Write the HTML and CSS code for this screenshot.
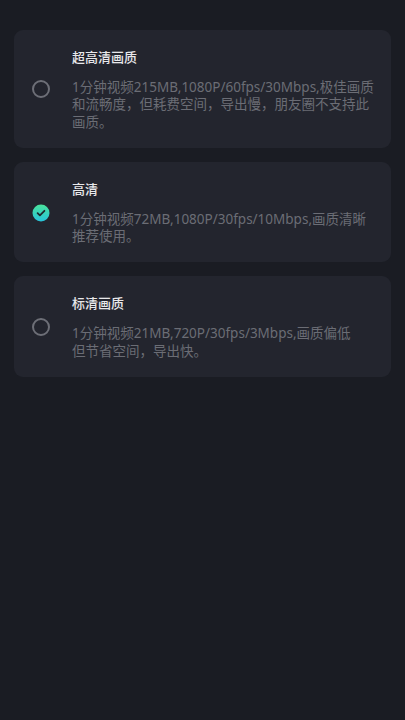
FILE: index.html
```html
<!DOCTYPE html>
<html lang="zh-CN">
<head>
<meta charset="utf-8">
<meta name="viewport" content="width=device-width, initial-scale=1">
<link rel="stylesheet" href="styles.css">
<title>画质选择</title>
</head>
<body>
<main class="list">
  <section class="card">
    <span class="radio"></span>
    <div class="info">
      <div class="title">超高清画质</div>
      <div class="desc">1分钟视频215MB,1080P/60fps/30Mbps,极佳画质<br>和流畅度，但耗费空间，导出慢，朋友圈不支持此<br>画质。</div>
    </div>
  </section>
  <section class="card">
    <span class="radio checked">
      <svg viewBox="0 0 18 18" width="18" height="18">
        <defs>
          <linearGradient id="g" x1="0" y1="0" x2="0" y2="1">
            <stop offset="0" stop-color="#4ae39b"/>
            <stop offset="1" stop-color="#27c4dc"/>
          </linearGradient>
        </defs>
        <circle cx="9" cy="9" r="8.5" fill="url(#g)"/>
        <path d="M5.6 9.2 L7.9 11.4 L12.4 6.8" fill="none" stroke="#1e2a30" stroke-width="1.8" stroke-linecap="round" stroke-linejoin="round"/>
      </svg>
    </span>
    <div class="info">
      <div class="title">高清</div>
      <div class="desc">1分钟视频72MB,1080P/30fps/10Mbps,画质清晰<br>推荐使用。</div>
    </div>
  </section>
  <section class="card">
    <span class="radio"></span>
    <div class="info">
      <div class="title">标清画质</div>
      <div class="desc">1分钟视频21MB,720P/30fps/3Mbps,画质偏低<br>但节省空间，导出快。</div>
    </div>
  </section>
</main>
</body>
</html>
```
FILE: styles.css
```css
html, body {
  margin: 0;
  padding: 0;
  background: #1a1c23;
  height: 100%;
}
body {
  font-family: "Noto Sans", "Noto Sans CJK SC", sans-serif;
  color: #e6e6e8;
}
.list {
  display: flex;
  flex-direction: column;
  gap: 14px;
  padding: 30px 14px 0 14px;
}
.card {
  display: flex;
  align-items: center;
  background: #23252e;
  border-radius: 9px;
  padding: 18px 16px 17px 17.5px;
}
.radio {
  flex: none;
  width: 18px;
  height: 18px;
  box-sizing: border-box;
  border: 2px solid #6d6f77;
  border-radius: 50%;
  margin-right: 22.5px;
  display: flex;
}
.radio.checked {
  border: none;
}
.info {
  display: flex;
  flex-direction: column;
  gap: 13px;
}
.title {
  font-size: 13px;
  line-height: 18px;
  font-weight: 500;
  color: #e8e8ea;
}
.desc {
  font-size: 13.5px;
  line-height: 17.3px;
  color: #6b6d75;
  white-space: nowrap;
}
```
